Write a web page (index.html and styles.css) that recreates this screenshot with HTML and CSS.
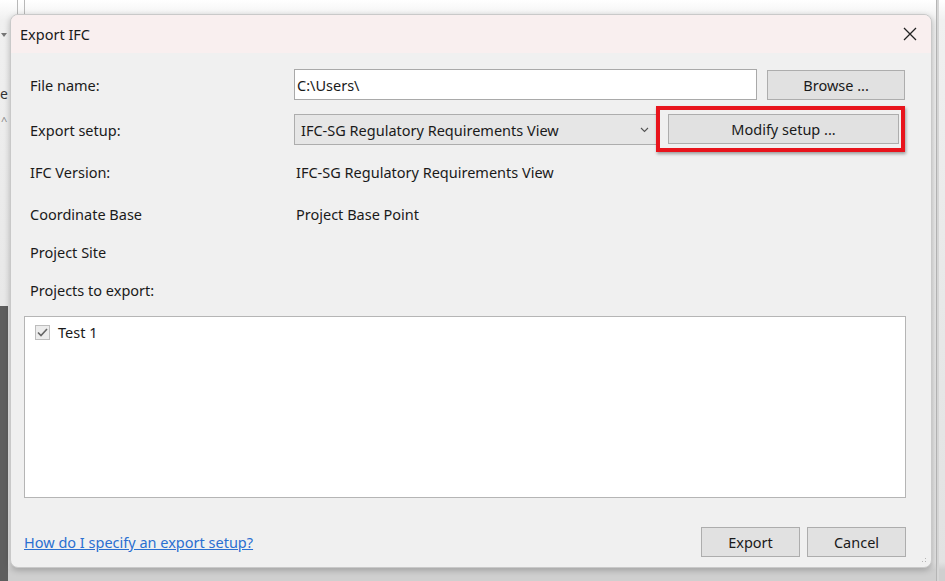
FILE: index.html
```html
<!DOCTYPE html>
<html>

<head>
    <title>Export IFC</title>
    <meta charset="UTF-8">
    <link rel="stylesheet" href="styles.css">
</head>

<body>
    <div class="desktop">
        <div class="behind-left">
            <span class="tri"></span>
            <span class="peek">e</span>
            <span class="caret">^</span>
            <div class="dark-bar"></div>
        </div>
        <div class="behind-right"></div>

        <div class="dialog">
            <div class="titlebar">
                <span class="title">Export IFC</span>
                <svg class="close" width="14" height="14" viewBox="0 0 14 14">
                    <path d="M1 1 L13 13 M13 1 L1 13" stroke="#222" stroke-width="1.3" fill="none"/>
                </svg>
            </div>

            <div class="content">
                <div class="row row-file">
                    <label class="label">File name:</label>
                    <input class="textbox" type="text" value="C:\Users\">
                    <button class="btn btn-browse">Browse ...</button>
                </div>

                <div class="row row-setup">
                    <label class="label">Export setup:</label>
                    <div class="combo">
                        <span>IFC-SG Regulatory Requirements View</span>
                        <svg width="9" height="6" viewBox="0 0 9 6">
                            <path d="M1 1 L4.5 4.5 L8 1" stroke="#555" stroke-width="1.1" fill="none"/>
                        </svg>
                    </div>
                    <div class="highlight">
                        <button class="btn btn-modify">Modify setup ...</button>
                    </div>
                </div>

                <div class="row row-info">
                    <span class="label">IFC Version:</span>
                    <span class="value">IFC-SG Regulatory Requirements View</span>
                </div>
                <div class="row row-info">
                    <span class="label">Coordinate Base</span>
                    <span class="value">Project Base Point</span>
                </div>
                <div class="row row-site">
                    <span class="label">Project Site</span>
                </div>
                <div class="row row-projects">
                    <span class="label">Projects to export:</span>
                </div>

                <div class="listbox">
                    <div class="item">
                        <span class="check">
                            <svg width="11" height="9" viewBox="0 0 11 9">
                                <path d="M1 4.5 L4 7.5 L10 1" stroke="#666" stroke-width="1.6" fill="none"/>
                            </svg>
                        </span>
                        <span>Test 1</span>
                    </div>
                </div>

                <div class="footer">
                    <a href="#" class="help">How do I specify an export setup?</a>
                    <div class="actions">
                        <button class="btn btn-action">Export</button>
                        <button class="btn btn-action">Cancel</button>
                    </div>
                </div>
            </div>
            <div class="grip"></div>
        </div>
    </div>
</body>

</html>
```

FILE: styles.css
```css
* {
    box-sizing: border-box;
}

body {
    margin: 0;
    width: 945px;
    height: 581px;
    overflow: hidden;
    font-family: "Noto Sans", "Open Sans", sans-serif;
    font-size: 14.5px;
    color: #1a1a1a;
    background: #e8e8e8;
}

.desktop {
    position: relative;
    width: 945px;
    height: 581px;
    display: flex;
    padding: 14px 0 0 10px;
    background: linear-gradient(to bottom, #ffffff 0, #f0f0f0 20px, #e8e8e8 300px, #e2e2e2 562px, #cfcfcf 570px);
}

.behind-left {
    position: absolute;
    left: 0;
    top: 0;
    width: 10px;
    height: 581px;
}

.behind-left::after {
    content: "";
    position: absolute;
    left: 17px;
    top: 0;
    width: 6px;
    height: 15px;
    border-left: 1px solid #b8b8b8;
    border-right: 1px solid #b8b8b8;
}

.tri {
    position: absolute;
    left: 1px;
    top: 33px;
    border-left: 3px solid transparent;
    border-right: 3px solid transparent;
    border-top: 4px solid #777;
}

.peek {
    position: absolute;
    left: 0;
    top: 84px;
    font-size: 14px;
    color: #333;
}

.caret {
    position: absolute;
    left: 1px;
    top: 113px;
    font-size: 11px;
    color: #888;
}

.dark-bar {
    position: absolute;
    left: 0;
    top: 306px;
    width: 8px;
    height: 275px;
    background: #5e5e5e;
}

.behind-right {
    position: absolute;
    left: 936px;
    top: 0;
    width: 3px;
    height: 581px;
    border-left: 1px solid #b5b5b5;
    background: #d6d6d6;
}

.dialog {
    position: relative;
    width: 922px;
    height: 554px;
    background: #f0f0f0;
    border: 1px solid #c9c9c9;
    border-radius: 8px;
    box-shadow: 0 2px 6px rgba(0, 0, 0, 0.25);
    display: flex;
    flex-direction: column;
    overflow: hidden;
}

.titlebar {
    height: 38px;
    background: #f9efef;
    display: flex;
    align-items: center;
    justify-content: space-between;
    padding: 0 14px 0 9px;
}

.title {
    font-size: 14.5px;
    color: #1a1a1a;
}

.content {
    flex: 1;
    padding: 16px 26px 0 19px;
    display: flex;
    flex-direction: column;
}

.row {
    display: flex;
    align-items: center;
}

.label {
    width: 264px;
    flex: none;
}

.row-file {
    height: 31px;
}

.textbox {
    width: 464px;
    height: 31px;
    border: 1px solid #a9a9a9;
    background: #fff;
    font: inherit;
    color: #1a1a1a;
    padding: 0 2px;
    outline: none;
}

.btn {
    font: inherit;
    color: #1a1a1a;
    background: #e1e1e1;
    border: 1px solid #adadad;
    padding: 0;
}

.btn-browse {
    margin-left: 10px;
    width: 138px;
    height: 30px;
}

.row-setup {
    margin-top: 14px;
    height: 31px;
}

.combo {
    width: 364px;
    height: 31px;
    border: 1px solid #adadad;
    background: #e6e6e6;
    display: flex;
    align-items: center;
    justify-content: space-between;
    padding: 0 7px 0 6px;
}

.highlight {
    margin-left: -1px;
    margin-top: -1px;
    width: 249px;
    height: 46px;
    border: 4px solid #e8141c;
    box-shadow: 1px 2px 3px rgba(0, 0, 0, 0.35);
    display: flex;
    align-items: center;
    padding: 0 2px 0 8px;
}

.btn-modify {
    width: 231px;
    height: 30px;
}

.row-info {
    height: 20px;
    margin-top: 17px;
}

.row-info + .row-info {
    margin-top: 22px;
}

.value {
    padding-left: 2px;
}

.row-site {
    height: 20px;
    margin-top: 18px;
}

.row-projects {
    height: 20px;
    margin-top: 18px;
}

.listbox {
    margin-top: 16px;
    margin-left: -6px;
    width: 882px;
    height: 182px;
    background: #fff;
    border: 1px solid #b5b5b5;
    padding: 5px 10px;
}

.item {
    display: flex;
    align-items: center;
    gap: 8px;
}

.check {
    width: 15px;
    height: 15px;
    border: 1px solid #bdbdbd;
    background: #ececec;
    display: flex;
    align-items: center;
    justify-content: center;
}

.footer {
    margin-top: 29px;
    margin-left: -6px;
    width: 882px;
    display: flex;
    align-items: center;
    justify-content: space-between;
}

.help {
    color: #2a6fd1;
    text-decoration: underline;
}

.actions {
    display: flex;
    gap: 7px;
}

.btn-action {
    width: 99px;
    height: 30px;
}

.grip {
    position: absolute;
    right: 3px;
    bottom: 3px;
    width: 10px;
    height: 10px;
    background-image: radial-gradient(circle, #b5b5b5 0.8px, transparent 1px);
    background-size: 3px 3px;
    clip-path: polygon(100% 0, 100% 100%, 0 100%);
}
```
